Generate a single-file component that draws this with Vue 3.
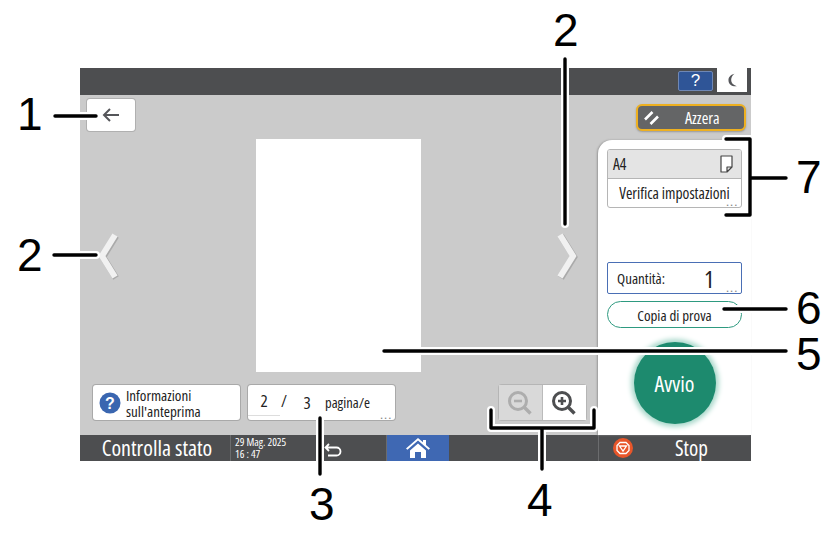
<template>
  <div class="page">
    <div class="screen">
      <div class="topbar">
        <button class="help">?</button>
        <button class="moon">
          <svg width="12" height="15" viewBox="0 0 14 18"><path d="M10 1C5 2.200 2.500 5.500 2.800 9.200 3.100 13.400 7 16.500 12.800 15.800 8.300 14.600 6 12 6 8.500 6 5.600 7.500 3 10 1Z" fill="#55565a"/></svg>
        </button>
      </div>

      <div class="main">
        <div class="preview">
          <div class="row-top">
            <button class="back">
              <svg width="18" height="14" viewBox="0 0 18 14"><path d="M17 7H2M8 1 2 7l6 6" fill="none" stroke="#55565a" stroke-width="2"/></svg>
            </button>
          </div>
          <div class="row-mid">
            <svg class="chev" width="24" height="50" viewBox="0 0 24 50"><path d="M18 4 5 25l13 21" fill="none" stroke="#8a8a8a" stroke-width="6.500" opacity=".5" transform="translate(1 1)"/><path d="M18 4 5 25l13 21" fill="none" stroke="#f1f1f1" stroke-width="6"/></svg>
            <div class="sheet"></div>
            <svg class="chev" width="24" height="50" viewBox="0 0 24 50"><path d="M6 4l13 21L6 46" fill="none" stroke="#8a8a8a" stroke-width="6.500" opacity=".5" transform="translate(1 1)"/><path d="M6 4l13 21L6 46" fill="none" stroke="#f1f1f1" stroke-width="6"/></svg>
          </div>
          <div class="row-bottom">
            <button class="btn info">
              <svg width="22" height="22" viewBox="0 0 22 22"><circle cx="11" cy="11" r="10.500" fill="#3a66b0"/><text x="11" y="16.500" text-anchor="middle" class="q">?</text></svg>
              <span>Informazioni<br>sull'anteprima</span>
            </button>
            <button class="btn pages">
              <span class="num cur">{{ current }}</span>
              <span class="slash">/</span>
              <span class="num last">{{ total }}</span>
              <span class="unit">pagina/e</span>
              <span class="dots">...</span>
            </button>
            <div class="zoomer">
              <button class="zoom-btn off">
                <svg width="26" height="26" viewBox="0 0 26 26"><circle cx="11" cy="11" r="8.500" fill="none" stroke="#adadad" stroke-width="3"/><path d="M7 11h8" stroke="#adadad" stroke-width="2.600"/><path d="M17.500 17.500l6 6" stroke="#adadad" stroke-width="3.400"/></svg>
              </button>
              <button class="zoom-btn">
                <svg width="26" height="26" viewBox="0 0 26 26"><circle cx="11" cy="11" r="8.500" fill="none" stroke="#4d4e50" stroke-width="3"/><path d="M7 11h8M11 7v8" stroke="#4d4e50" stroke-width="2.600"/><path d="M17.500 17.500l6 6" stroke="#4d4e50" stroke-width="3.400"/></svg>
              </button>
            </div>
          </div>
        </div>

        <div class="side">
          <div class="side-top">
            <button class="reset">
              <svg width="16" height="16" viewBox="0 0 16 16"><path d="M1 9.500 8.500 2M6.500 14 14 6.500" stroke="#fff" stroke-width="2.600" fill="none"/></svg>
              <span>Azzera</span>
            </button>
          </div>
          <div class="panel">
            <div class="card">
              <div class="card-head">
                <span>A4</span>
                <svg width="13" height="18" viewBox="0 0 13 18"><path d="M1 1h11v11l-5 5H1Z M12 12H7v5" fill="#fff" stroke="#444" stroke-width="1.200" stroke-linejoin="round"/></svg>
              </div>
              <div class="card-body">Verifica impostazioni<span class="dots">...</span></div>
            </div>
            <div class="qty">
              <span>Quantità:</span>
              <b>{{ qty }}</b>
              <span class="dots">...</span>
            </div>
            <button class="proof">Copia di prova</button>
            <button class="start">Avvio</button>
          </div>
        </div>
      </div>

      <div class="bottombar">
        <div class="status">Controlla stato</div>
        <div class="clock">29 Mag. 2025<br>16 : 47</div>
        <div class="return">
          <svg width="18" height="14" viewBox="0 0 18 14"><path d="M5 1 1.500 4.500 5 8M2 4.500h10.500a4 4 0 0 1 0 8H4" fill="none" stroke="#fff" stroke-width="1.800"/></svg>
        </div>
        <button class="home">
          <svg width="26" height="22" viewBox="0 0 26 22"><path d="M13 1 1 11.500l1.400 1.300L13 3.600l10.600 9.200 1.400-1.300-4-3.500V3h-3v2.200Z" fill="#fff"/><path d="M5 13.500 13 6.500l8 7V21h-5v-6h-6v6H5Z" fill="#fff"/></svg>
        </button>
        <div class="spacer"></div>
        <div class="stop">
          <svg width="20" height="20" viewBox="0 0 20 20"><circle cx="10" cy="10" r="10" fill="#e8562a"/><path d="M7 4.500h6L16 7.500v5L13 15.500H7L4 12.500v-5Z" fill="none" stroke="#fff" stroke-width="1.300"/><path d="M6.500 8h7L10 13Z" fill="none" stroke="#fff" stroke-width="1.300"/></svg>
          <span>Stop</span>
        </div>
      </div>
    </div>

    <!-- richiami numerati sopra lo schermo -->
    <svg class="marks" width="837" height="535" viewBox="0 0 837 535">
      <g v-for="(d, i) in marks" :key="i" fill="none">
        <path :d="d" stroke="#fff" stroke-width="8" stroke-linecap="round" stroke-linejoin="round"/>
      </g>
      <g v-for="(d, i) in marks" :key="'k' + i" fill="none">
        <path :d="d" stroke="#000" stroke-width="3.400" stroke-linecap="round" stroke-linejoin="round"/>
      </g>
    </svg>
    <span v-for="c in callouts" :key="c.id" class="callout" :style="{ left: c.x + 'px', top: c.y + 'px' }">{{ c.n }}</span>
  </div>
</template>

<script setup>
const current = 2;
const total = 3;
const qty = 1;

const marks = [
  'M55 116H96',
  'M54 255H96',
  'M565 59V224',
  'M726 139H750V215H726M750 178H786',
  'M724 309H786',
  'M384 351H786',
  'M491 410V428H594V410M542 428V469',
  'M320 418V474',
];

const callouts = [
  { id: 'a', n: '1', x: 17, y: 89 },
  { id: 'b', n: '2', x: 17, y: 230 },
  { id: 'c', n: '2', x: 553, y: 5 },
  { id: 'd', n: '3', x: 309, y: 479 },
  { id: 'e', n: '4', x: 527, y: 475 },
  { id: 'f', n: '5', x: 796, y: 329 },
  { id: 'g', n: '6', x: 796, y: 283 },
  { id: 'h', n: '7', x: 796, y: 152 },
];
</script>

<style>
html, body {
  margin: 0;
  background: #fff;
  overflow: hidden;
}
</style>

<style scoped>
.page {
  position: relative;
  width: 837px;
  height: 535px;
  padding: 68px 0 0 80px;
  box-sizing: border-box;
  font-family: "Open Sans", "Liberation Sans", sans-serif;
  font-stretch: 75%;
  color: #222;
  background: #fff;
}
button {
  font: inherit;
  font-stretch: 75%;
  color: inherit;
  padding: 0;
  border: none;
  background: none;
}
.screen {
  width: 671px;
  height: 393px;
  display: flex;
  flex-direction: column;
  background: #cbcbcb;
}
.topbar {
  height: 27px;
  flex: none;
  box-sizing: border-box;
  background: #4d4e50;
  display: flex;
  justify-content: flex-end;
  align-items: flex-start;
  padding: 3px 4px 0 0;
  gap: 4px;
}
.help {
  width: 35px;
  height: 20px;
  background: #2f5597;
  border: 1px solid #6f87b4;
  border-radius: 2px;
  box-sizing: border-box;
  color: #fff;
  font-family: "Liberation Sans", sans-serif;
  font-size: 17px;
  line-height: 18px;
}
.moon {
  width: 30px;
  height: 24px;
  margin-top: -3px;
  background: #fff;
  display: flex;
  align-items: center;
  justify-content: center;
}
.main {
  flex: 1;
  min-height: 0;
  display: flex;
}
.preview {
  width: 518px;
  flex: none;
  display: flex;
  flex-direction: column;
}
.row-top {
  height: 44px;
  padding: 4px 0 0 7px;
  box-sizing: border-box;
}
.back {
  width: 48px;
  height: 32px;
  background: #fff;
  border-radius: 3px;
  box-shadow: 0 0 0 1px #b0b0b0;
  display: flex;
  align-items: center;
  justify-content: center;
}
.row-mid {
  height: 233px;
  display: flex;
  align-items: center;
  padding-left: 17px;
}
.chev {
  flex: none;
}
.sheet {
  width: 165px;
  height: 233px;
  margin: 0 133px 0 135px;
  background: #fff;
}
.row-bottom {
  margin-top: 13px;
  padding-left: 13px;
  display: flex;
  align-items: flex-start;
}
.btn {
  height: 35px;
  width: 147px;
  box-sizing: border-box;
  position: relative;
  background: #fff;
  border-radius: 3px;
  box-shadow: 0 0 0 1px #a9a9a9;
  display: flex;
  align-items: center;
  text-align: left;
}
.info {
  gap: 5px;
  padding-left: 6px;
  font-size: 15px;
  line-height: 16px;
}
.q {
  fill: #fff;
  font: bold 16px "Liberation Sans", sans-serif;
}
.pages {
  margin-left: 8px;
  font-size: 14.500px;
}
.num {
  width: 32px;
  text-align: center;
  font-size: 17px;
}
.cur {
  margin-left: 0;
  padding-bottom: 3px;
  border-bottom: 1px solid #ddd;
}
.slash {
  width: 4px;
  margin: 0 10px 0 1px;
  font-size: 16px;
  padding-bottom: 3px;
}
.last {
  width: 24px;
}
.unit {
  margin-left: 6px;
}
.dots {
  position: absolute;
  right: 3px;
  bottom: 1px;
  font: 13px/8px "Liberation Sans", sans-serif;
  letter-spacing: 0.500px;
  color: #888;
}
.zoomer {
  margin-left: 104px;
  display: flex;
  height: 35px;
  border-radius: 3px;
  box-shadow: 0 0 0 1px #b5b5b5;
}
.zoom-btn {
  width: 43.500px;
  background: #fff;
  display: flex;
  align-items: center;
  justify-content: center;
}
.zoom-btn.off {
  background: #d9d9d9;
  border-right: 1px solid #bbb;
}
.side {
  width: 153px;
  flex: none;
  display: flex;
  flex-direction: column;
}
.side-top {
  height: 45px;
  display: flex;
  justify-content: flex-end;
  padding: 9px 5px 0 0;
  box-sizing: border-box;
}
.reset {
  width: 110px;
  height: 27px;
  box-sizing: border-box;
  border: 2px solid #eeb020;
  border-radius: 6px;
  background: #646566;
  color: #fff;
  font-size: 16px;
  display: flex;
  align-items: center;
  padding-left: 6px;
  gap: 25px;
  box-shadow: 0 1px 2px #999;
}
.panel {
  flex: 1;
  background: #fff;
  border-top-left-radius: 14px;
  box-shadow: -1px 0 2px #999;
  padding: 9px 9px 0;
  display: flex;
  flex-direction: column;
  align-items: center;
  position: relative;
}
.card {
  width: 135px;
  height: 59px;
  box-sizing: border-box;
  border: 1px solid #b5b5b5;
  border-radius: 3px;
  overflow: hidden;
  flex: none;
}
.card-head {
  height: 29px;
  box-sizing: border-box;
  background: #e4e4e4;
  border-bottom: 1px solid #b5b5b5;
  display: flex;
  justify-content: space-between;
  align-items: center;
  padding: 0 8px 0 5px;
  font-size: 15.500px;
}
.card-body {
  position: relative;
  height: 28px;
  line-height: 28px;
  text-align: center;
  font-size: 15.500px;
}
.qty {
  position: relative;
  margin-top: 54px;
  width: 135px;
  height: 32px;
  box-sizing: border-box;
  flex: none;
  border: 1px solid #4a6fb5;
  border-radius: 2px;
  display: flex;
  align-items: center;
  padding-left: 9px;
  font-size: 15px;
}
.qty b {
  font-weight: 400;
  font-size: 24px;
  position: absolute;
  left: 96px;
}
.proof {
  margin-top: 7px;
  width: 135px;
  height: 27px;
  flex: none;
  box-sizing: border-box;
  border: 1px solid #2e9a80;
  border-radius: 14px;
  font-size: 15px;
  line-height: 24px;
}
.start {
  margin-top: 14px;
  width: 82px;
  height: 82px;
  flex: none;
  border-radius: 50%;
  background: #1d8a6e;
  color: #fff;
  font-size: 22px;
  box-shadow: 0 0 5px 3px #a9d8cb;
}
.bottombar {
  height: 26px;
  flex: none;
  background: #4d4e50;
  color: #fff;
  display: flex;
  align-items: stretch;
}
.status {
  width: 151px;
  box-sizing: border-box;
  border-right: 1px solid #6b6c6e;
  text-align: center;
  font-size: 22px;
  line-height: 25px;
  padding-left: 4px;
}
.clock {
  width: 84px;
  padding: 1px 0 0 4px;
  box-sizing: border-box;
  font-size: 11px;
  line-height: 12px;
}
.return {
  width: 72px;
  box-sizing: border-box;
  border-right: 1px solid #6b6c6e;
  padding: 5px 0 0 9px;
}
.home {
  width: 62px;
  background: #3f68b3;
  display: flex;
  align-items: center;
  justify-content: center;
}
.spacer {
  flex: 1;
}
.stop {
  width: 153px;
  flex: none;
  box-sizing: border-box;
  border-left: 1px solid #6b6c6e;
  display: flex;
  align-items: center;
  padding-left: 14px;
  gap: 42px;
  font-size: 21px;
}
.marks {
  position: absolute;
  left: 0;
  top: 0;
  pointer-events: none;
}
.callout {
  position: absolute;
  font: 46px/50px "Liberation Sans", sans-serif;
  font-stretch: normal;
  color: #000;
}
</style>
